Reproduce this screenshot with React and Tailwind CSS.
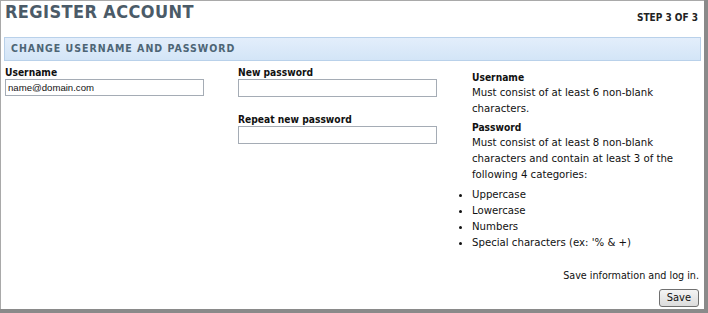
export default function App() {
  return (
    <div className="w-[708px] h-[313px] bg-[#8a8a8a] font-['DejaVu_Sans_Condensed',sans-serif] text-[11.3px] text-[#111]">
      <div className="w-[704px] h-[309px] bg-white border-l border-t border-[#a9a9a9] flex flex-col">
        {/* header */}
        <div className="flex items-start justify-between pl-[4px] pr-[6px]">
          <h1 className="text-[18px] font-bold tracking-[0.4px] text-[#4b5b68] leading-[22px] mt-[0px]">
            REGISTER ACCOUNT
          </h1>
          <div className="font-bold text-[10px] mt-[9px] text-[#222]">STEP 3 OF 3</div>
        </div>

        <div className="mx-[3px] mt-[12px] h-[24px] border border-[#b9d1ea] bg-gradient-to-b from-[#e3eefb] to-[#d3e5f7] flex items-center pl-[6px]">
          <span className="text-[10.5px] font-bold tracking-[1px] text-[#4d6575]">
            CHANGE USERNAME AND PASSWORD
          </span>
        </div>

        <div className="flex mt-[5px] pl-[4px]">
          {/* username */}
          <div className="w-[233px]">
            <label className="block font-bold text-[10.2px] leading-[13px]">Username</label>
            <input
              type="text"
              defaultValue="name@domain.com"
              className="block w-[199px] h-[17px] border border-[#a5acb5] px-[2px] text-[9.6px] font-['Liberation_Sans',sans-serif] outline-none"
            />
          </div>

          {/* passwords */}
          <div className="w-[233px]">
            <label className="block font-bold text-[10.2px] leading-[13px]">New password</label>
            <input
              type="password"
              className="block w-[199px] h-[18px] border border-[#a5acb5] outline-none"
            />
            <label className="block font-bold text-[10.2px] leading-[13px] mt-[16px]">Repeat new password</label>
            <input
              type="password"
              className="block w-[199px] h-[18px] border border-[#a5acb5] outline-none"
            />
          </div>

          {/* rules */}
          <div className="flex-1 pl-[1px] pr-[6px] leading-[16px] mt-[5px]">
            <div className="font-bold text-[10.2px] leading-[14px]">Username</div>
            <div>Must consist of at least 6 non-blank<br />characters.</div>
            <div className="font-bold text-[10.2px] leading-[14px] mt-[4px]">Password</div>
            <div>
              Must consist of at least 8 non-blank
              <br />
              characters and contain at least 3 of the
              <br />
              following 4 categories:
            </div>
            <ul className="list-disc list-outside pl-0 mt-[4px]">
              <li>Uppercase</li>
              <li>Lowercase</li>
              <li>Numbers</li>
              <li>Special characters (ex: '% &amp; +)</li>
            </ul>
          </div>
        </div>

        <div className="flex flex-col items-end pr-[5px] mt-auto mb-[2px]">
          <div className="leading-[16px] text-[10.7px]">Save information and log in.</div>
          <button className="mt-[5px] h-[18px] px-[7px] border border-[#707070] rounded-[3px] bg-gradient-to-b from-[#f4f4f4] to-[#dcdcdc] text-[11px] leading-[14px]">
            Save
          </button>
        </div>
      </div>
    </div>
  )
}
